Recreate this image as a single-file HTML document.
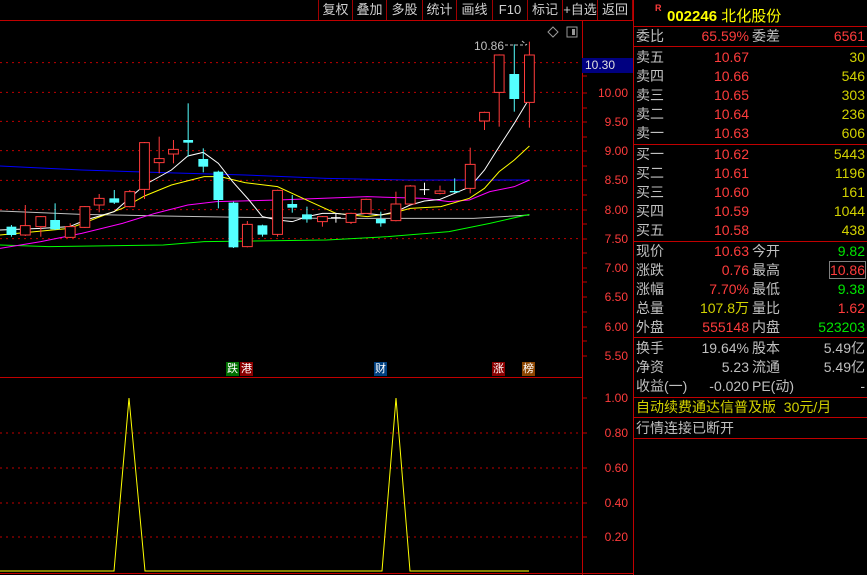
<!DOCTYPE html>
<html><head><meta charset="utf-8"><style>
*{margin:0;padding:0;box-sizing:border-box}
body{width:867px;height:575px;background:#000;overflow:hidden;position:relative;font-family:"Liberation Sans","WenQuanYi Zen Hei",sans-serif;}
.a{position:absolute;white-space:nowrap}
.tb{position:absolute;top:0;height:20px;line-height:20px;font-size:13px;color:#d0d0d0;text-align:center;border-left:1px solid #a00000}
.hl{position:absolute;height:1px;background:#c00000}
.vl{position:absolute;width:1px;background:#c00000}
.ax{position:absolute;font-size:12px;color:#ff3c3c;left:590px;width:38px;text-align:right}
.r{position:absolute;font-size:14px;line-height:19px;height:19px}
.g{color:#c0c0c0}.rd{color:#ff3c3c}.y{color:#d2d200}.gr{color:#00e600}
.mk{position:absolute;top:362px;width:13px;height:14px;font-size:11px;line-height:14px;color:#fff;text-align:center}
</style></head><body>
<div class="tb" style="left:318px;width:34px">复权</div>
<div class="tb" style="left:352px;width:34px">叠加</div>
<div class="tb" style="left:386px;width:36px">多股</div>
<div class="tb" style="left:422px;width:34px">统计</div>
<div class="tb" style="left:456px;width:36px">画线</div>
<div class="tb" style="left:492px;width:35px">F10</div>
<div class="tb" style="left:527px;width:35px">标记</div>
<div class="tb" style="left:562px;width:35px">+自选</div>
<div class="tb" style="left:597px;width:36px;border-right:1px solid #a00000">返回</div>
<div class="hl" style="left:0;top:20px;width:633px"></div>
<div class="vl" style="left:582px;top:20px;height:555px"></div>
<div class="vl" style="left:633px;top:0;height:575px"></div>
<div class="hl" style="left:0;top:377px;width:582px"></div>
<div class="hl" style="left:0;top:573px;width:633px"></div>

<svg class="a" style="left:0;top:0" width="640" height="260" viewBox="0 0 1568 780" preserveAspectRatio="none">
<g stroke="#c00000" stroke-dasharray="2 4" stroke-width="1">
<line x1="0" y1="188" x2="1425" y2="188" vector-effect="non-scaling-stroke"/>
<line x1="0" y1="277" x2="1425" y2="277" vector-effect="non-scaling-stroke"/>
<line x1="0" y1="364" x2="1425" y2="364" vector-effect="non-scaling-stroke"/>
<line x1="0" y1="452" x2="1425" y2="452" vector-effect="non-scaling-stroke"/>
<line x1="0" y1="541" x2="1425" y2="541" vector-effect="non-scaling-stroke"/>
<line x1="0" y1="629" x2="1425" y2="629" vector-effect="non-scaling-stroke"/>
<line x1="0" y1="716" x2="1425" y2="716" vector-effect="non-scaling-stroke"/>
</g>
<g fill="none" stroke-width="1">
<polyline vector-effect="non-scaling-stroke" stroke="#0000ff" points="0,498 200,510 400,518 600,525 800,535 1000,540 1200,540 1297,540"/>
<polyline vector-effect="non-scaling-stroke" stroke="#c0c0c0" points="0,633 200,643 400,648 600,652 800,655 1000,655 1160,655 1297,645"/>
<polyline vector-effect="non-scaling-stroke" stroke="#00ff00" points="0,735 120,740 400,735 500,725 800,720 950,710 1100,695 1200,670 1297,643"/>
<polyline vector-effect="non-scaling-stroke" stroke="#ff00ff" points="0,745 100,725 200,700 300,670 380,640 460,615 530,605 680,600 900,590 1040,595 1100,605 1150,600 1200,575 1260,560 1297,540"/>
<polyline vector-effect="non-scaling-stroke" stroke="#ffff00" points="0,705 170,685 300,625 354,588 420,555 500,530 540,530 600,548 680,560 760,605 823,640 900,650 960,640 1005,625 1080,620 1150,595 1187,565 1223,515 1260,480 1297,438"/>
<polyline vector-effect="non-scaling-stroke" stroke="#ffffff" points="0,690 100,685 170,680 210,660 280,635 354,555 420,510 460,468 498,457 535,490 570,545 610,600 643,650 680,660 716,665 752,650 790,640 823,640 860,645 897,640 933,645 970,635 1005,615 1040,603 1078,598 1114,580 1152,560 1187,510 1223,440 1260,370 1297,295"/>
</g>
<g id="c"></g>
</svg>
<script>
var C=[[28,680,705,675,710,'c'],[62,677,705,615,708,'r'],[100,650,680,648,710,'r'],[135,660,688,610,690,'c'],[172,680,712,670,714,'r'],[208,620,682,618,684,'r'],[243,595,615,582,637,'r'],[280,595,608,570,612,'c'],[318,575,620,570,622,'r'],[354,428,568,426,597,'r'],[390,476,488,410,520,'r'],[425,448,462,420,490,'r'],[461,420,428,310,470,'c'],[498,477,500,445,517,'c'],[535,515,600,512,625,'c'],[572,608,742,605,744,'c'],[606,673,740,663,742,'r'],[643,676,704,674,710,'c'],[680,571,703,569,710,'r'],[716,612,623,585,638,'c'],[752,643,658,620,668,'c'],[790,650,665,648,680,'r'],[823,653,655,640,668,'w'],[860,640,667,638,672,'r'],[897,598,640,596,642,'r'],[933,657,670,635,680,'c'],[970,612,662,575,664,'r'],[1005,558,612,555,614,'r'],[1040,569,571,548,585,'w'],[1078,573,580,557,583,'r'],[1114,573,577,535,579,'c'],[1152,493,565,443,580,'r'],[1187,337,363,335,390,'r'],[1223,165,277,163,380,'r'],[1260,222,297,133,335,'c'],[1297,165,307,125,383,'r']];
var s='';C.forEach(function(k){var col=k[5]=='r'?'#ff3c3c':k[5]=='c'?'#54ffff':'#ffffff';var x=k[0],w=12;
s+='<line x1="'+x+'" y1="'+k[3]+'" x2="'+x+'" y2="'+k[4]+'" stroke="'+col+'" vector-effect="non-scaling-stroke"/>';
if(k[5]=='r')s+='<rect x="'+(x-w)+'" y="'+k[1]+'" width="'+(2*w)+'" height="'+(k[2]-k[1])+'" fill="#000" stroke="'+col+'" vector-effect="non-scaling-stroke"/>';
else if(k[5]=='c')s+='<rect x="'+(x-w)+'" y="'+k[1]+'" width="'+(2*w)+'" height="'+(k[2]-k[1])+'" fill="'+col+'"/>';
else s+='<line x1="'+(x-w)+'" y1="'+k[1]+'" x2="'+(x+w)+'" y2="'+k[1]+'" stroke="#fff" vector-effect="non-scaling-stroke"/>';});
document.getElementById('c').innerHTML=s;
</script>
<div class="a" style="left:474px;top:39px;font-size:12px;color:#c0c0c0">10.86</div>
<svg class="a" style="left:504px;top:38px" width="26" height="10"><path d="M1 7 H22 M18 3 L23 7" stroke="#c0c0c0" fill="none" stroke-dasharray="3 2"/></svg>
<svg class="a" style="left:546px;top:26px" width="36" height="14"><path d="M7 1 L12 6 L7 11 L2 6 Z" stroke="#999" fill="none"/><rect x="21" y="1" width="10" height="10" stroke="#999" fill="none"/><rect x="26" y="3" width="3" height="6" fill="#999"/></svg>

<svg class="a" style="left:582px;top:20px" width="6" height="555"><g stroke="#c00000"><line x1="0" y1="56" x2="5" y2="56"/><line x1="0" y1="73" x2="5" y2="73"/><line x1="0" y1="88" x2="5" y2="88"/><line x1="0" y1="102" x2="5" y2="102"/><line x1="0" y1="117" x2="5" y2="117"/><line x1="0" y1="131" x2="5" y2="131"/><line x1="0" y1="146" x2="5" y2="146"/><line x1="0" y1="160" x2="5" y2="160"/><line x1="0" y1="175" x2="5" y2="175"/><line x1="0" y1="190" x2="5" y2="190"/><line x1="0" y1="204" x2="5" y2="204"/><line x1="0" y1="219" x2="5" y2="219"/><line x1="0" y1="233" x2="5" y2="233"/><line x1="0" y1="248" x2="5" y2="248"/><line x1="0" y1="262" x2="5" y2="262"/><line x1="0" y1="277" x2="5" y2="277"/><line x1="0" y1="292" x2="5" y2="292"/><line x1="0" y1="307" x2="5" y2="307"/><line x1="0" y1="321" x2="5" y2="321"/><line x1="0" y1="336" x2="5" y2="336"/><line x1="0" y1="378" x2="5" y2="378"/><line x1="0" y1="413" x2="5" y2="413"/><line x1="0" y1="448" x2="5" y2="448"/><line x1="0" y1="483" x2="5" y2="483"/><line x1="0" y1="517" x2="5" y2="517"/></g></svg>

<div class="a" style="left:582px;top:58px;width:51px;height:15px;background:#000080;color:#e0e0e0;font-size:12px;line-height:15px;padding-left:3px">10.30</div>
<div class="ax" style="top:86px">10.00</div>
<div class="ax" style="top:115px">9.50</div>
<div class="ax" style="top:144px">9.00</div>
<div class="ax" style="top:173px">8.50</div>
<div class="ax" style="top:203px">8.00</div>
<div class="ax" style="top:232px">7.50</div>
<div class="ax" style="top:261px">7.00</div>
<div class="ax" style="top:290px">6.50</div>
<div class="ax" style="top:320px">6.00</div>
<div class="ax" style="top:349px">5.50</div>
<div class="ax" style="top:391px">1.00</div>
<div class="ax" style="top:426px">0.80</div>
<div class="ax" style="top:461px">0.60</div>
<div class="ax" style="top:496px">0.40</div>
<div class="ax" style="top:530px">0.20</div>

<div class="mk" style="left:226px;background:#007000">跌</div>
<div class="mk" style="left:240px;background:#8b0000">港</div>
<div class="mk" style="left:374px;background:#004080">财</div>
<div class="mk" style="left:492px;background:#8b0000">涨</div>
<div class="mk" style="left:522px;background:#8b4500">榜</div>

<svg class="a" style="left:0;top:378px" width="582" height="197">
<g stroke="#c00000" stroke-dasharray="2 4"><line x1="0" y1="55" x2="582" y2="55"/><line x1="0" y1="90" x2="582" y2="90"/><line x1="0" y1="125" x2="582" y2="125"/><line x1="0" y1="159" x2="582" y2="159"/></g>
<polyline fill="none" stroke="#ffff00" points="0,193 114,193 129,20 145,193 382,193 396,20 410,193 529,193"/>
</svg>

<div class="a" style="left:655px;top:3px;font-size:9px;color:#ff3c3c;font-weight:bold">R</div>
<div class="a" style="left:667px;top:5px;font-size:15px;color:#ffff00"><b>002246</b> 北化股份</div>
<div class="hl" style="left:633px;top:26px;width:234px"></div>
<div class="hl" style="left:633px;top:46px;width:234px"></div>
<div class="hl" style="left:633px;top:144px;width:234px"></div>
<div class="hl" style="left:633px;top:241px;width:234px"></div>
<div class="hl" style="left:633px;top:337px;width:234px"></div>
<div class="hl" style="left:633px;top:397px;width:234px"></div>
<div class="hl" style="left:633px;top:417px;width:234px"></div>
<div class="hl" style="left:633px;top:438px;width:234px"></div>
<div class="a" style="left:829px;top:261px;width:37px;height:18px;border:1px solid #808080"></div>

<div id="rp"></div>
<script>
var R=[[27,'委比','65.59%','rd','委差','6561','rd'],
[48,'卖五','10.67','rd','','30','y'],[67,'卖四','10.66','rd','','546','y'],[86,'卖三','10.65','rd','','303','y'],[105,'卖二','10.64','rd','','236','y'],[124,'卖一','10.63','rd','','606','y'],
[145,'买一','10.62','rd','','5443','y'],[164,'买二','10.61','rd','','1196','y'],[183,'买三','10.60','rd','','161','y'],[202,'买四','10.59','rd','','1044','y'],[221,'买五','10.58','rd','','438','y'],
[242,'现价','10.63','rd','今开','9.82','gr'],[261,'涨跌','0.76','rd','最高','10.86','rd'],[280,'涨幅','7.70%','rd','最低','9.38','gr'],[299,'总量','107.8万','y','量比','1.62','rd'],[318,'外盘','555148','rd','内盘','523203','gr'],
[339,'换手','19.64%','g','股本','5.49亿','g'],[358,'净资','5.23','g','流通','5.49亿','g'],[377,'收益(一)','-0.020','g','PE(动)','-','g']];
var h='';R.forEach(function(r){var t=r[0];
h+='<div class="r g" style="left:636px;top:'+t+'px">'+r[1]+'</div>';
h+='<div class="r '+r[3]+'" style="left:680px;width:69px;text-align:right;top:'+t+'px">'+r[2]+'</div>';
if(r[4])h+='<div class="r g" style="left:752px;top:'+t+'px">'+r[4]+'</div>';
h+='<div class="r '+r[6]+'" style="left:790px;width:75px;text-align:right;top:'+t+'px">'+r[5]+'</div>';});
h+='<div class="r y" style="left:636px;top:398px">自动续费通达信普及版 &nbsp;30元/月</div>';
h+='<div class="r g" style="left:636px;top:419px">行情连接已断开</div>';
document.getElementById('rp').innerHTML=h;
</script>
</body></html>
